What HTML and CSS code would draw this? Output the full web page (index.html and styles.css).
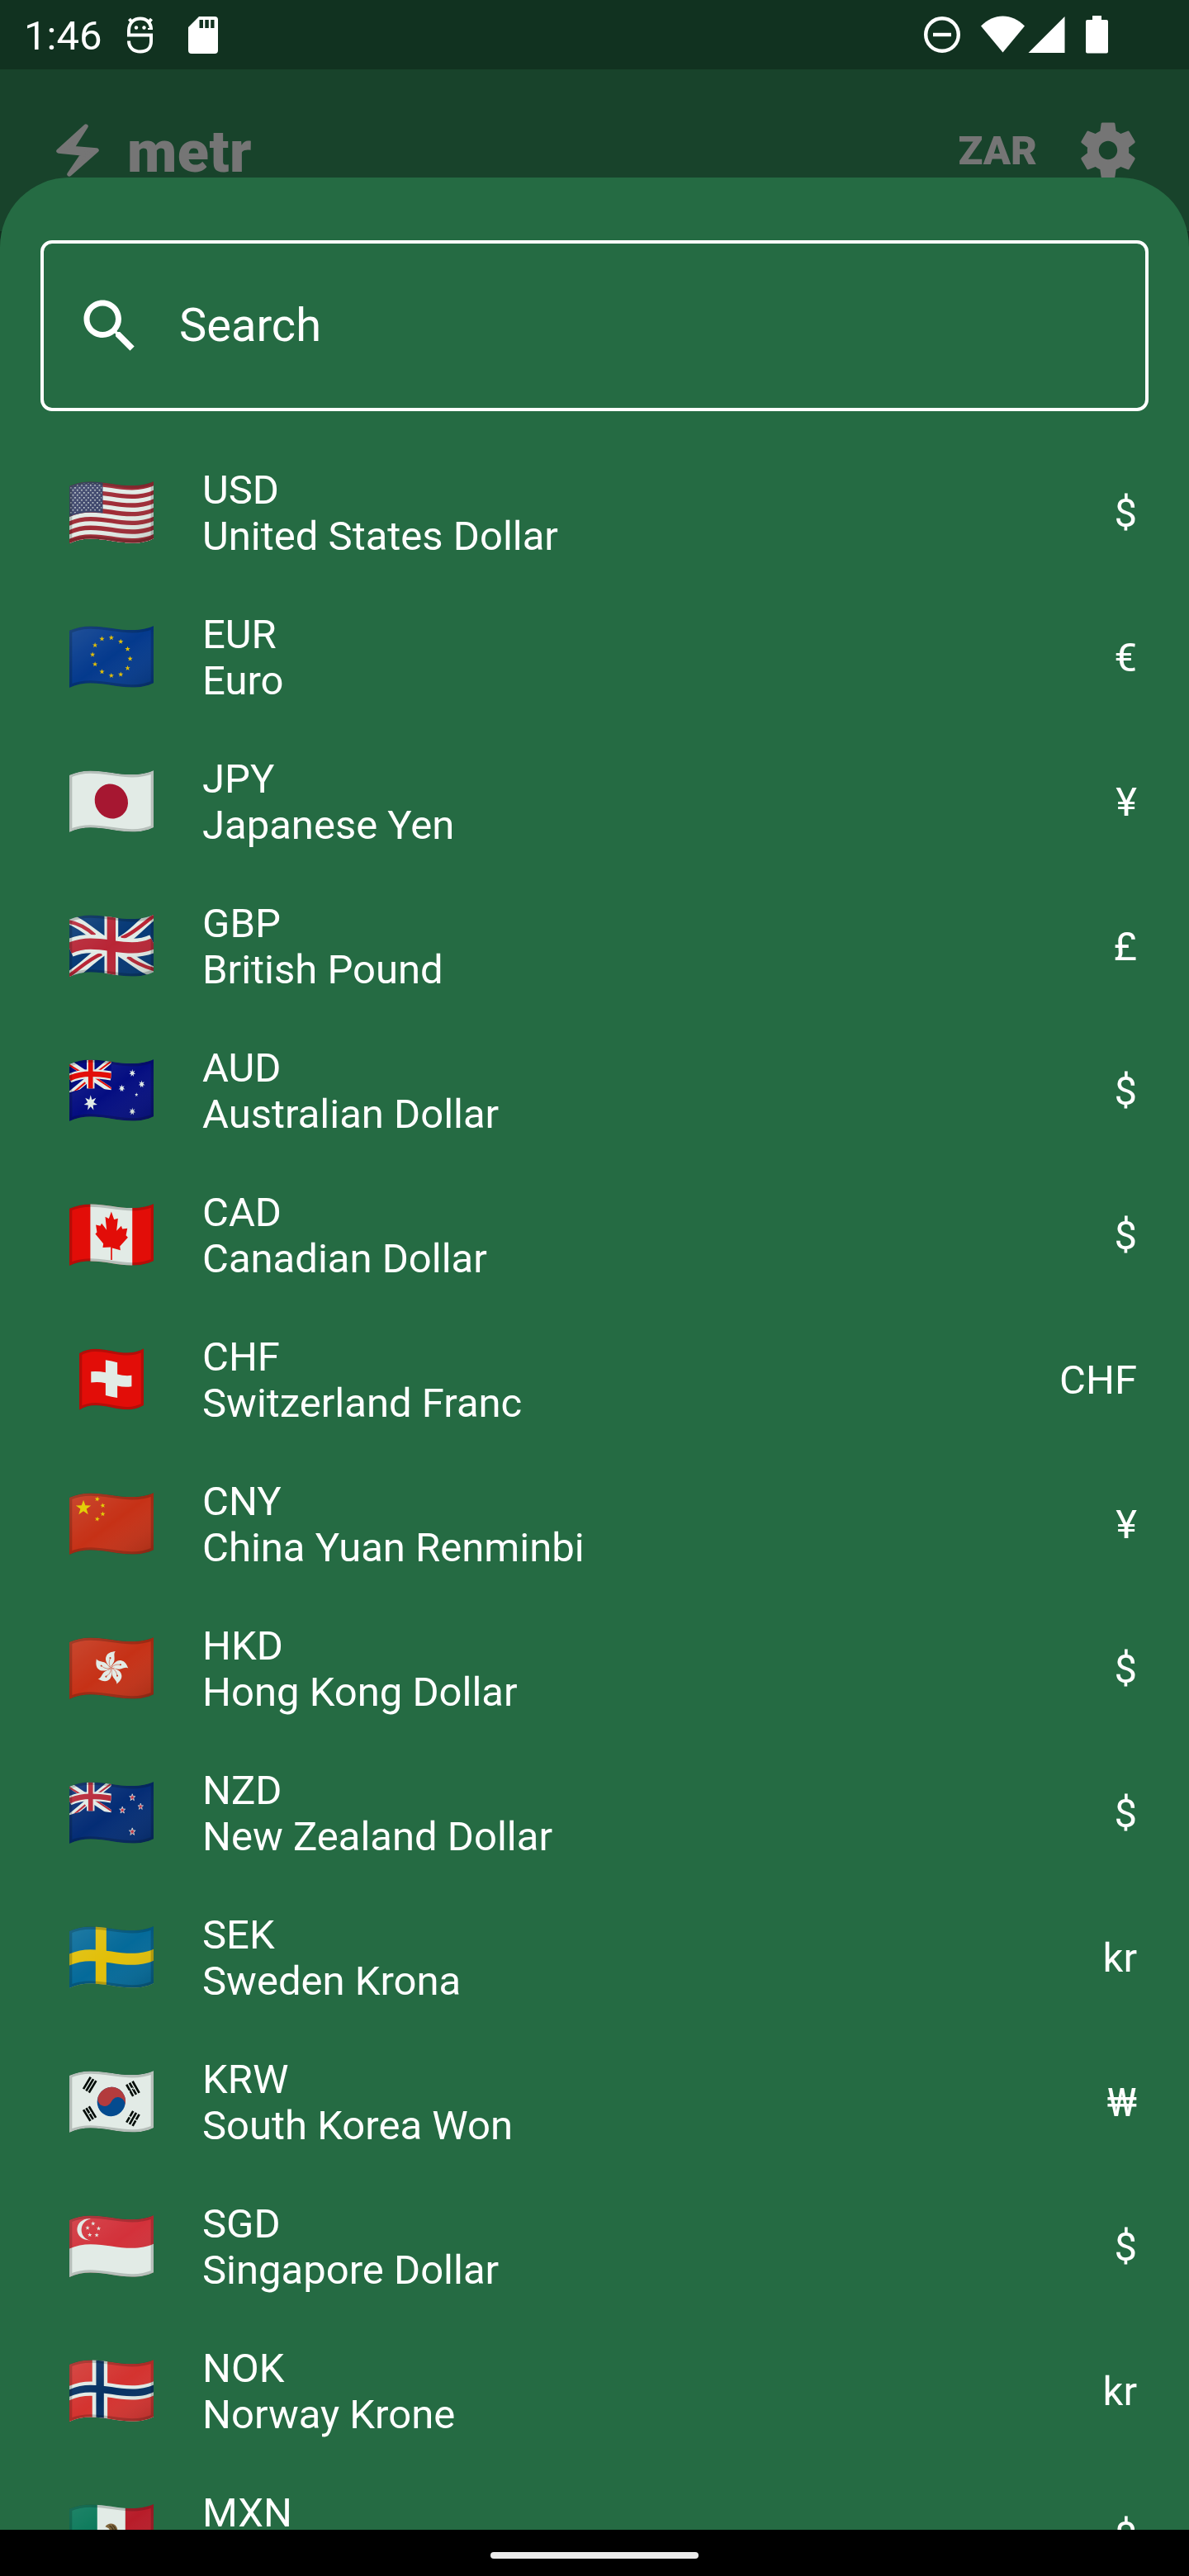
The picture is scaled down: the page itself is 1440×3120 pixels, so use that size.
FILE: index.html
```html
<!DOCTYPE html>
<html lang="en">
<head>
    <meta charset="UTF-8">
    <title>metr</title>
    <link rel="stylesheet" href="styles.css">
</head>
<body>
    <!-- Shared flag shapes -->
    <svg class="defs" width="0" height="0">
        <defs>
            <path id="wave" d="M0 17C25 6 50 1 77 1C130 1 175 15 227 15C258 15 282 10 305 0V207C282 218 258 223 227 223C175 223 130 208 77 208C50 208 25 213 0 224Z"/>
            <path id="wave-square" d="M0 17C19 5 38 1 59 1C100 1 135 15 175 15C199 15 217 10 235 0V207C217 218 199 223 175 223C135 223 100 208 59 208C38 208 19 213 0 224Z"/>
            <clipPath id="clip"><use href="#wave"/></clipPath>
            <clipPath id="clip-square"><use href="#wave-square"/></clipPath>
            <clipPath id="canton"><path d="M0 17C25 6 50 1 77 1C104 1 128 4 152 8V111C128 107 104 105 77 105C50 105 25 111 0 121Z"/></clipPath>
            <linearGradient id="shade" x1="0" y1="0" x2="1" y2="1">
                <stop offset="0" stop-color="#fff" stop-opacity=".13"/>
                <stop offset=".5" stop-color="#fff" stop-opacity="0"/>
                <stop offset="1" stop-color="#000" stop-opacity=".16"/>
            </linearGradient>
            <path id="star" d="M0-10L2.4-3.2L9.5-3.1L3.8 1.2L5.9 8.1L0 4L-5.9 8.1L-3.8 1.2L-9.5-3.1L-2.4-3.2Z"/>
            <path id="star7" d="M0-10L1.9-4L7.8-6.2L4.3-1L9.7 2.2L3.5 2.7L4.3 9L0 4.4L-4.3 9L-3.5 2.7L-9.7 2.2L-4.3-1L-7.8-6.2L-1.9-4Z"/>
            <pattern id="us-stars" width="16" height="18" patternUnits="userSpaceOnUse">
                <circle cx="5" cy="5" r="2.7" fill="#fff"/>
                <circle cx="13" cy="14" r="2.7" fill="#fff"/>
            </pattern>
            <g id="edge"><use href="#wave" class="edge"/></g>
            <!-- Union Jack in the upper left quarter -->
            <g id="jack" clip-path="url(#canton)">
                <path class="st-white" stroke-width="20" d="M0 12L152 113M0 128L152 2"/>
                <path class="st-red" stroke-width="6" d="M-3 19L58 56M156 108L95 67M-3 135L58 84M94 50L156 4"/>
                <path class="st-white" stroke-width="33" d="M0 69C25 58 50 53 77 53C104 53 128 56 152 60"/>
                <path class="st-white" stroke-width="28" d="M77-5V120"/>
                <path class="st-red" stroke-width="20" d="M0 69C25 58 50 53 77 53C104 53 128 56 152 60"/>
                <path class="st-red" stroke-width="17" d="M77-5V120"/>
            </g>
        </defs>
    </svg>

    <div class="status-bar">
        <span class="clock">1:46</span>
        <svg class="ic-debug" width="32" height="46" viewBox="0 0 32 46" fill="none" stroke="#fff" stroke-width="4">
            <path d="M29 16C29 8 24 2.500 16 2.500C8 2.500 2 8 2 17V22.500H29V30C29 38 24 42.500 16 42.500C8 42.500 2 38 2 29.500M2.500 3L6 7M29.500 3L26 7"/>
            <path d="M28 14V16" stroke-width="6"/>
            <circle cx="11" cy="13.500" r="2.200" fill="#fff" stroke="none"/>
            <circle cx="20.500" cy="13.500" r="2.200" fill="#fff" stroke="none"/>
        </svg>
        <svg class="ic-sd" width="36" height="45" viewBox="0 0 36 45" fill="#fff">
            <path fill-rule="evenodd" d="M13 0H32A4 4 0 0 1 36 4V41A4 4 0 0 1 32 45H4A4 4 0 0 1 0 41V13ZM13.500 4V14H18V4ZM20.300 4V14H24.800V4ZM27.200 4V14H31.500V4Z"/>
        </svg>
        <div class="status-icons">
            <svg class="ic-dnd" width="44" height="44" viewBox="0 0 44 44" fill="none" stroke="#fff" stroke-width="4.400">
                <circle cx="22" cy="22" r="19.800"/>
                <path d="M11 22H33"/>
            </svg>
            <svg class="ic-wifi" width="53" height="45" viewBox="0 0 53 45" fill="#fff">
                <path d="M0 12.500C8 4.500 17 .500 26.500 .500S45 4.500 53 12.500L26.500 44.500Z"/>
            </svg>
            <svg class="ic-signal" width="45" height="45" viewBox="0 0 45 45" fill="#fff">
                <path d="M.500 44L44.500 0V44Z"/>
            </svg>
            <svg class="ic-battery" width="27" height="46" viewBox="0 0 27 46" fill="#fff">
                <path d="M8 0H19V5H25A2 2 0 0 1 27 7V43.500A2 2 0 0 1 25 45.500H2A2 2 0 0 1 0 43.500V7A2 2 0 0 1 2 5H8Z"/>
            </svg>
        </div>
    </div>

    <div class="app-bar">
        <svg class="ic-bolt" width="52" height="66" viewBox="0 0 52 66">
            <path d="M36 3L3 33L33 36L16 61L49 32L19 29.500Z" fill="#757575" stroke="#757575" stroke-width="5.500" stroke-linejoin="round"/>
        </svg>
        <span class="brand">metr</span>
        <span class="currency">ZAR</span>
        <svg class="ic-gear" width="84" height="84" viewBox="0 0 24 24" fill="#757575">
            <path d="M19.140 12.940c.04-.3.060-.610.060-.940 0-.320-.02-.640-.070-.940l2.030-1.580c.18-.14.230-.410.120-.610l-1.920-3.320c-.12-.220-.370-.290-.590-.220l-2.390.960c-.5-.380-1.030-.7-1.620-.940l-.360-2.540c-.04-.240-.240-.410-.480-.410h-3.840c-.240 0-.430.170-.470.410l-.360 2.540c-.590.240-1.130.570-1.620.940l-2.390-.960c-.220-.080-.470 0-.590.220L2.740 8.870c-.12.210-.080.470.12.610l2.030 1.580c-.05.3-.09.630-.09.940s.02.640.07.940l-2.030 1.580c-.18.140-.23.410-.12.610l1.920 3.320c.12.220.37.290.59.220l2.390-.96c.5.380 1.030.7 1.620.94l.36 2.540c.05.240.24.410.48.410h3.840c.24 0 .44-.17.47-.41l.36-2.540c.59-.24 1.130-.56 1.620-.94l2.390.96c.22.080.47 0 .59-.22l1.920-3.320c.12-.22.070-.47-.12-.61l-2.010-1.580zM12 15.200c-1.770 0-3.200-1.430-3.200-3.200s1.430-3.200 3.200-3.200 3.200 1.430 3.200 3.200-1.430 3.200-3.200 3.200z"/>
        </svg>
    </div>

    <div class="sheet">
        <div class="search-box">
            <svg class="ic-search" width="84" height="84" viewBox="0 0 24 24" fill="#fff">
                <path d="M15.500 14h-.79l-.28-.27C15.410 12.590 16 11.110 16 9.500 16 5.910 13.090 3 9.500 3S3 5.910 3 9.500 5.910 16 9.500 16c1.610 0 3.090-.59 4.230-1.570l.27.28v.79l5 4.990L20.490 19l-4.990-5zm-6 0C7.010 14 5 11.990 5 9.500S7.010 5 9.500 5 14 7.010 14 9.500 11.990 14 9.500 14z"/>
            </svg>
            <span class="placeholder">Search</span>
        </div>

        <ul class="currency-list">
            <li class="row">
                <svg class="flag" viewBox="0 0 305 224">
                    <g clip-path="url(#clip)">
                        <use href="#wave" fill="#b22234"/>
                        <use href="#wave" y="15.900" fill="#fff"/>
                        <use href="#wave" y="31.800" fill="#b22234"/>
                        <use href="#wave" y="47.800" fill="#fff"/>
                        <use href="#wave" y="63.700" fill="#b22234"/>
                        <use href="#wave" y="79.600" fill="#fff"/>
                        <use href="#wave" y="95.500" fill="#b22234"/>
                        <use href="#wave" y="111.500" fill="#fff"/>
                        <use href="#wave" y="127.400" fill="#b22234"/>
                        <use href="#wave" y="143.300" fill="#fff"/>
                        <use href="#wave" y="159.200" fill="#b22234"/>
                        <use href="#wave" y="175.200" fill="#fff"/>
                        <use href="#wave" y="191.100" fill="#b22234"/>
                        <path d="M0 17C25 6 50 1 77 1C94 1 108 2 121 4V115C108 113 94 112 77 112C50 112 25 118 0 128Z" fill="#3c3b6e"/>
                        <path d="M4 20C25 11 50 6 77 6C94 6 108 7 117 9V108C108 107 94 106 77 106C50 106 25 112 4 120Z" fill="url(#us-stars)"/>
                        <use href="#wave" fill="url(#shade)"/>
                        <use href="#edge"/>
                    </g>
                </svg>
                <div class="names"><span>USD</span><span>United States Dollar</span></div>
                <span class="symbol">$</span>
            </li>
            <li class="row">
                <svg class="flag" viewBox="0 0 305 224">
                    <g clip-path="url(#clip)">
                        <use href="#wave" fill="#039"/>
                        <use href="#wave" fill="url(#shade)"/>
                        <g fill="#fc0">
                            <use href="#star" transform="translate(152 43)"/>
                            <use href="#star" transform="translate(186 57)"/>
                            <use href="#star" transform="translate(211 84)"/>
                            <use href="#star" transform="translate(220 119)"/>
                            <use href="#star" transform="translate(211 153)"/>
                            <use href="#star" transform="translate(186 176)"/>
                            <use href="#star" transform="translate(152 180)"/>
                            <use href="#star" transform="translate(118 166)"/>
                            <use href="#star" transform="translate(93 139)"/>
                            <use href="#star" transform="translate(84 104)"/>
                            <use href="#star" transform="translate(93 70)"/>
                            <use href="#star" transform="translate(118 47)"/>
                        </g>
                        <use href="#edge"/>
                    </g>
                </svg>
                <div class="names"><span>EUR</span><span>Euro</span></div>
                <span class="symbol">€</span>
            </li>
            <li class="row">
                <svg class="flag" viewBox="0 0 305 224">
                    <g clip-path="url(#clip)">
                        <use href="#wave" fill="#fff"/>
                        <ellipse cx="152" cy="112" rx="59" ry="64" fill="#ba0b2f" transform="rotate(-30 152 112)"/>
                        <use href="#edge"/>
                    </g>
                </svg>
                <div class="names"><span>JPY</span><span>Japanese Yen</span></div>
                <span class="symbol">¥</span>
            </li>
            <li class="row">
                <svg class="flag" viewBox="0 0 305 224">
                    <g clip-path="url(#clip)">
                        <use href="#wave" fill="#00307d"/>
                        <path class="st-white" stroke-width="37" d="M-5 14C50 30 90 80 152 112C210 145 260 195 310 207M-5 226C60 190 90 140 152 112C220 90 260 30 310 -5"/>
                        <path class="st-red" stroke-width="13" d="M-3 25C30 30 65 50 92 74M308 198C280 190 240 175 211 152M-3 221C30 200 70 160 117 141M188 84C230 70 270 30 308 2"/>
                        <path class="st-white" stroke-width="66" d="M0 121C25 110 50 105 77 105C130 105 175 119 227 119C258 119 282 114 305 103"/>
                        <path class="st-white" stroke-width="50" d="M152-5V230"/>
                        <path class="st-red" stroke-width="40" d="M0 121C25 110 50 105 77 105C130 105 175 119 227 119C258 119 282 114 305 103"/>
                        <path class="st-red" stroke-width="31" d="M152-5V230"/>
                        <use href="#wave" fill="url(#shade)"/>
                        <use href="#edge"/>
                    </g>
                </svg>
                <div class="names"><span>GBP</span><span>British Pound</span></div>
                <span class="symbol">£</span>
            </li>
            <li class="row">
                <svg class="flag flag-au" viewBox="0 0 305 224">
                    <g clip-path="url(#clip)">
                        <use href="#wave" fill="#00008b"/>
                        <use href="#jack"/>
                        <g fill="#fff">
                            <use href="#star7" transform="translate(77 158) scale(2.500 2.900)"/>
                            <use href="#star7" transform="translate(228 50) scale(1.200 1.400)"/>
                            <use href="#star7" transform="translate(262 90) scale(1.200 1.400)"/>
                            <use href="#star7" transform="translate(190 105) scale(1.200 1.400)"/>
                            <use href="#star7" transform="translate(228 189) scale(1.200 1.400)"/>
                            <use href="#star" transform="translate(243 128) scale(.65 .8)"/>
                        </g>
                        <path d="M152 0H305V224H0V125C60 100 100 105 152 111Z" fill="url(#shade)"/>
                        <use href="#edge"/>
                    </g>
                </svg>
                <div class="names"><span>AUD</span><span>Australian Dollar</span></div>
                <span class="symbol">$</span>
            </li>
            <li class="row">
                <svg class="flag" viewBox="0 0 305 224">
                    <g clip-path="url(#clip)">
                        <use href="#wave" fill="#f00"/>
                        <path d="M76 0H228V224H76Z" fill="#fff"/>
                        <path d="M152 28L162 57L176 53L171 98L188 80L192 91L210 89L205 114L212 122L183 154L185 168L155 160L155 203H150L150 157L121 158L123 144L94 109L100 103L96 76L112 80L117 71L135 95L130 47L143 54Z" fill="#f00"/>
                        <use href="#edge"/>
                    </g>
                </svg>
                <div class="names"><span>CAD</span><span>Canadian Dollar</span></div>
                <span class="symbol">$</span>
            </li>
            <li class="row">
                <svg class="flag flag-square" viewBox="0 0 235 224">
                    <g clip-path="url(#clip-square)">
                        <use href="#wave-square" fill="#f00"/>
                        <path d="M96 42Q118 45 139 51V94Q165 101 191 98V138Q165 142 139 136V180Q118 177 96 171V126Q69 120 43 124V84Q69 82 96 87Z" fill="#fff"/>
                        <use href="#wave-square" class="edge"/>
                    </g>
                </svg>
                <div class="names"><span>CHF</span><span>Switzerland Franc</span></div>
                <span class="symbol">CHF</span>
            </li>
            <li class="row">
                <svg class="flag" viewBox="0 0 305 224">
                    <g clip-path="url(#clip)">
                        <use href="#wave" fill="#de2910"/>
                        <use href="#wave" fill="url(#shade)"/>
                        <g fill="#ffde00">
                            <use href="#star" transform="translate(51 55) scale(2.900)"/>
                            <use href="#star" transform="translate(101 23) rotate(10) scale(.95)"/>
                            <use href="#star" transform="translate(121 46) rotate(-10) scale(.95)"/>
                            <use href="#star" transform="translate(121 77) scale(.95)"/>
                            <use href="#star" transform="translate(101 95) rotate(10) scale(.95)"/>
                        </g>
                        <use href="#edge"/>
                    </g>
                </svg>
                <div class="names"><span>CNY</span><span>China Yuan Renminbi</span></div>
                <span class="symbol">¥</span>
            </li>
            <li class="row">
                <svg class="flag" viewBox="0 0 305 224">
                    <defs>
                        <g id="petal">
                            <path d="M0 0C-13-10-25-28-17-43C-12-54 0-58 16-60C8-52 14-41 12-28C10-16 0-10 0 0Z" fill="#fff"/>
                            <path d="M0-2C-9-12-8-24-3-34" fill="none" stroke="#de2910" stroke-width="1.500"/>
                            <circle cx="-3" cy="-36" r="3" fill="#de2910"/>
                        </g>
                    </defs>
                    <g clip-path="url(#clip)">
                        <use href="#wave" fill="#de2910"/>
                        <use href="#wave" fill="url(#shade)"/>
                        <g transform="translate(151 111)">
                            <use href="#petal" transform="rotate(0)"/>
                            <use href="#petal" transform="rotate(76)"/>
                            <use href="#petal" transform="rotate(146)"/>
                            <use href="#petal" transform="rotate(215)"/>
                            <use href="#petal" transform="rotate(287)"/>
                        </g>
                        <use href="#edge"/>
                    </g>
                </svg>
                <div class="names"><span>HKD</span><span>Hong Kong Dollar</span></div>
                <span class="symbol">$</span>
            </li>
            <li class="row">
                <svg class="flag" viewBox="0 0 305 224">
                    <g clip-path="url(#clip)">
                        <use href="#wave" fill="#00247d"/>
                        <use href="#jack"/>
                        <g fill="#e0253f" stroke="#fff" stroke-width="2">
                            <use href="#star" transform="translate(228 57) scale(1.100 1.300)"/>
                            <use href="#star" transform="translate(258 90) scale(1 1.200)"/>
                            <use href="#star" transform="translate(192 103) scale(1.100 1.300)"/>
                            <use href="#star" transform="translate(228 181) scale(1.200 1.400)"/>
                        </g>
                        <use href="#wave" fill="url(#shade)"/>
                        <use href="#edge"/>
                    </g>
                </svg>
                <div class="names"><span>NZD</span><span>New Zealand Dollar</span></div>
                <span class="symbol">$</span>
            </li>
            <li class="row">
                <svg class="flag" viewBox="0 0 305 224">
                    <g clip-path="url(#clip)">
                        <use href="#wave" fill="#006aa7"/>
                        <use href="#wave" y="83" fill="#fecc00"/>
                        <use href="#wave" y="125" fill="#006aa7"/>
                        <path d="M95 0H134V224H95Z" fill="#fecc00"/>
                        <use href="#wave" fill="url(#shade)"/>
                        <use href="#edge"/>
                    </g>
                </svg>
                <div class="names"><span>SEK</span><span>Sweden Krona</span></div>
                <span class="symbol">kr</span>
            </li>
            <li class="row">
                <svg class="flag" viewBox="0 0 305 224">
                    <g clip-path="url(#clip)">
                        <use href="#wave" fill="#fff"/>
                        <g transform="rotate(22 152 112)">
                            <ellipse cx="152" cy="112" rx="51" ry="53" fill="#00479b"/>
                            <path d="M101 112A51 53 0 0 1 203 112A25.500 26 0 0 0 152 112A25.500 26 0 0 1 101 112Z" fill="#c9353d"/>
                        </g>
                        <g fill="none" stroke="#000" stroke-width="8">
                            <path d="M51 66L77 23M61 73L87 30M71 79L97 36"/>
                            <path d="M51 141L76 182M61 135L86 176M71 129L96 170"/>
                            <path d="M207 50L231 92M218 44L242 86M229 38L253 80"/>
                            <path d="M207 187L231 146M218 194L242 152M229 200L253 158"/>
                        </g>
                        <path d="M70 157L80 151M213 77L219 73M231 67L237 62M224 66L230 62M213 163L225 171M233 174L245 181" stroke="#fff" stroke-width="4"/>
                        <use href="#edge"/>
                    </g>
                </svg>
                <div class="names"><span>KRW</span><span>South Korea Won</span></div>
                <span class="symbol">₩</span>
            </li>
            <li class="row">
                <svg class="flag" viewBox="0 0 305 224">
                    <g clip-path="url(#clip)">
                        <use href="#wave" fill="#ed2939"/>
                        <use href="#wave" fill="url(#shade)"/>
                        <use href="#wave" y="104" fill="#fff"/>
                        <path d="M77 13C12 10 12 93 77 91C33 83 33 22 77 13Z" fill="#fff"/>
                        <g fill="#fff">
                            <use href="#star" transform="translate(86 30) scale(.85)"/>
                            <use href="#star" transform="translate(66 46) scale(.85)"/>
                            <use href="#star" transform="translate(106 48) scale(.85)"/>
                            <use href="#star" transform="translate(74 71) scale(.85)"/>
                            <use href="#star" transform="translate(99 72) scale(.85)"/>
                        </g>
                        <use href="#edge"/>
                    </g>
                </svg>
                <div class="names"><span>SGD</span><span>Singapore Dollar</span></div>
                <span class="symbol">$</span>
            </li>
            <li class="row">
                <svg class="flag" viewBox="0 0 305 224">
                    <g clip-path="url(#clip)">
                        <use href="#wave" fill="#ef2b2d"/>
                        <use href="#wave" y="78" fill="#fff"/>
                        <use href="#wave" y="130" fill="#ef2b2d"/>
                        <path d="M83 0H138V224H83Z" fill="#fff"/>
                        <path d="M0 108C25 97 50 92 77 92C130 92 175 106 227 106C258 106 282 101 305 91V117C282 128 258 132 227 132C175 132 130 118 77 118C50 118 25 123 0 134Z" fill="#002868"/>
                        <path d="M97 0H125V224H97Z" fill="#002868"/>
                        <use href="#wave" fill="url(#shade)"/>
                        <use href="#edge"/>
                    </g>
                </svg>
                <div class="names"><span>NOK</span><span>Norway Krone</span></div>
                <span class="symbol">kr</span>
            </li>
            <li class="row">
                <svg class="flag" viewBox="0 0 305 224">
                    <g clip-path="url(#clip)">
                        <use href="#wave" fill="#00785a"/>
                        <path d="M101 0H203V224H101Z" fill="#fff"/>
                        <path d="M203 0H305V224H203Z" fill="#ce1126"/>
                        <path d="M130 81C138 70 151 67 162 73C172 79 177 91 174 112H136C148 104 148 95 143 88C138 84 134 84 130 81Z" fill="#8c6239"/>
                        <path d="M145 78C155 82 161 92 160 108M156 76C165 82 169 92 168 108" fill="none" stroke="#4a3018" stroke-width="4"/>
                        <use href="#wave" fill="url(#shade)"/>
                        <use href="#edge"/>
                    </g>
                </svg>
                <div class="names"><span>MXN</span><span>Mexico Peso</span></div>
                <span class="symbol">$</span>
            </li>
        </ul>
    </div>

    <div class="nav-bar"><div class="nav-pill"></div></div>
</body>
</html>
```

FILE: styles.css
```css
* {
    box-sizing: border-box;
}
body {
    margin: 0;
    width: 1440px;
    height: 3120px;
    overflow: hidden;
    display: flex;
    flex-direction: column;
    font-family: Roboto, sans-serif;
    color: #fff;
    background: linear-gradient(#18432b 280px, #122f1f 280px);
}
svg {
    display: block;
    flex: none;
}
.defs {
    position: absolute;
}

/* status bar */
.status-bar {
    height: 84px;
    flex: none;
    display: flex;
    align-items: flex-start;
    padding: 20px 98px 0 29px;
    background: #113220;
}
.clock {
    width: 125px;
    font-size: 49px;
    line-height: 48px;
}
.ic-sd {
    margin-left: 42px;
}
.status-icons {
    display: flex;
    margin-left: auto;
}
.ic-wifi {
    margin: -1px 4px 0 25px;
}
.ic-battery {
    margin: -1px 0 0 25px;
}

/* app bar */
.app-bar {
    height: 131px;
    flex: none;
    display: flex;
    align-items: flex-start;
    padding: 56px 56px 0 68px;
    color: #757575;
}
.ic-bolt {
    margin-top: 10px;
}
.brand {
    margin: 6px auto 0 34px;
    font-size: 70px;
    line-height: 76px;
    font-weight: 900;
    letter-spacing: .5px;
}
.currency {
    margin: 15px 44px 0 0;
    font-size: 49px;
    line-height: 56px;
    font-weight: 900;
}

/* bottom sheet */
.sheet {
    flex: 1;
    min-height: 0;
    overflow: hidden;
    padding: 76px 49px 0;
    border-radius: 84px 84px 0 0;
    background: #256b43;
}
.search-box {
    display: flex;
    align-items: center;
    gap: 42px;
    height: 207px;
    padding: 0 38px;
    border: 4px solid #fff;
    border-radius: 14px;
    font-size: 56px;
}
.placeholder {
    padding-bottom: 2px;
}
.currency-list {
    list-style: none;
    margin: 36px 0 0;
    padding: 0;
}
.row {
    display: flex;
    align-items: center;
    height: 175px;
    padding: 0 14px 0 35px;
    font-size: 49px;
    line-height: 56px;
}
.flag {
    width: 102px;
    height: 75px;
    margin: 0 59px 3px 0;
    opacity: .87;
}
.flag-square {
    width: 78px;
    margin: 0 71px 3px 12px;
}
.names {
    display: flex;
    flex-direction: column;
}
.symbol {
    margin-left: auto;
}
.edge {
    fill: none;
    stroke: #000;
    stroke-opacity: .2;
    stroke-width: 20;
}
.st-white {
    fill: none;
    stroke: #fff;
}
.st-red {
    fill: none;
    stroke: var(--flag-red, #cf1b34);
}
.flag-au {
    --flag-red: #f00;
}

/* navigation bar */
.nav-bar {
    height: 56px;
    flex: none;
    display: flex;
    align-items: center;
    justify-content: center;
    padding-top: 6px;
    background: #000;
}
.nav-pill {
    width: 252px;
    height: 8px;
    border-radius: 4px;
    background: #ebebeb;
}
```
